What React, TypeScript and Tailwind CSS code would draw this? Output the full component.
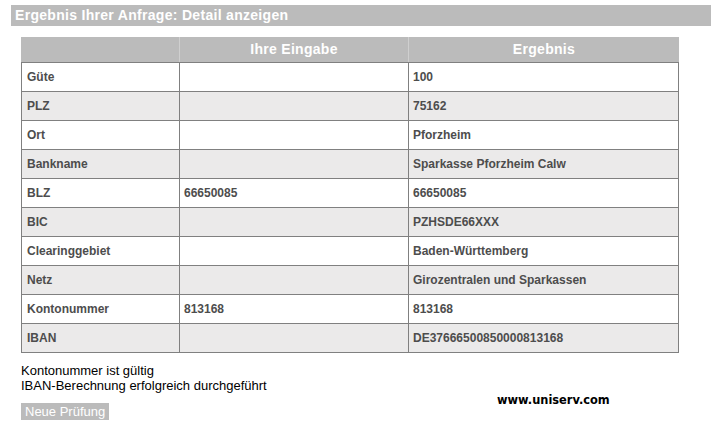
import React from 'react'

// Ergebnis-Zeilen: Feld, Eingabe, Ergebnis
const ROWS: [string, string, string][] = [
  ['Güte', '', '100'],
  ['PLZ', '', '75162'],
  ['Ort', '', 'Pforzheim'],
  ['Bankname', '', 'Sparkasse Pforzheim Calw'],
  ['BLZ', '66650085', '66650085'],
  ['BIC', '', 'PZHSDE66XXX'],
  ['Clearinggebiet', '', 'Baden-Württemberg'],
  ['Netz', '', 'Girozentralen und Sparkassen'],
  ['Kontonummer', '813168', '813168'],
  ['IBAN', '', 'DE37666500850000813168'],
]

export default function App() {
  return (
    <div className="h-[429px] w-[720px] overflow-hidden bg-white pt-[5px] font-['Liberation_Sans',Arial,sans-serif]">
      <div className="ml-[11px] h-[21px] w-[700px] bg-[#bbbbbb] pl-[4px] text-[14px] font-bold leading-[21px] tracking-[0.3px] text-white">
        Ergebnis Ihrer Anfrage: Detail anzeigen
      </div>

      <div className="ml-[21px] mt-[11px] w-[658px]">
        {/* Kopfzeile */}
        <div className="flex h-[25px] bg-[#bbbbbb] text-[14px] font-bold leading-[25px] tracking-[0.3px] text-white">
          <div className="w-[159px] border-r border-[#cfcfcf]" />
          <div className="w-[229px] border-r border-[#cfcfcf] text-center">Ihre Eingabe</div>
          <div className="flex-1 text-center">Ergebnis</div>
        </div>

        <div className="border-x border-b border-[#808080] text-[12px] font-bold text-[#4d4d4d]">
          {ROWS.map(([label, input, result], i) => (
            <div
              key={label}
              className={`flex h-[29px] border-t border-[#808080] leading-[28px] ${
                i % 2 === 1 ? 'bg-[#ebeaea]' : 'bg-white'
              }`}
            >
              <div className="w-[158px] border-r border-[#808080] pl-[5px]">{label}</div>
              <div className="w-[229px] border-r border-[#808080] pl-[4px]">{input}</div>
              <div className="flex-1 pl-[4px]">{result}</div>
            </div>
          ))}
        </div>
      </div>

      <div className="ml-[21px] mt-[10px] flex">
        <div className="w-[476px]">
          <div className="text-[13px] leading-[15px] text-black">
            <p>Kontonummer ist gültig</p>
            <p>IBAN-Berechnung erfolgreich durchgeführt</p>
          </div>
          <button className="mt-[10px] h-[17px] bg-[#bbbbbb] px-[4px] text-[13px] leading-[17px] text-white">
            Neue Prüfung
          </button>
        </div>
        <div className="mt-[31px] font-['DejaVu_Sans',Verdana,sans-serif] text-[11.4px] font-bold leading-[13px] text-black">
          www.uniserv.com
        </div>
      </div>
    </div>
  )
}
